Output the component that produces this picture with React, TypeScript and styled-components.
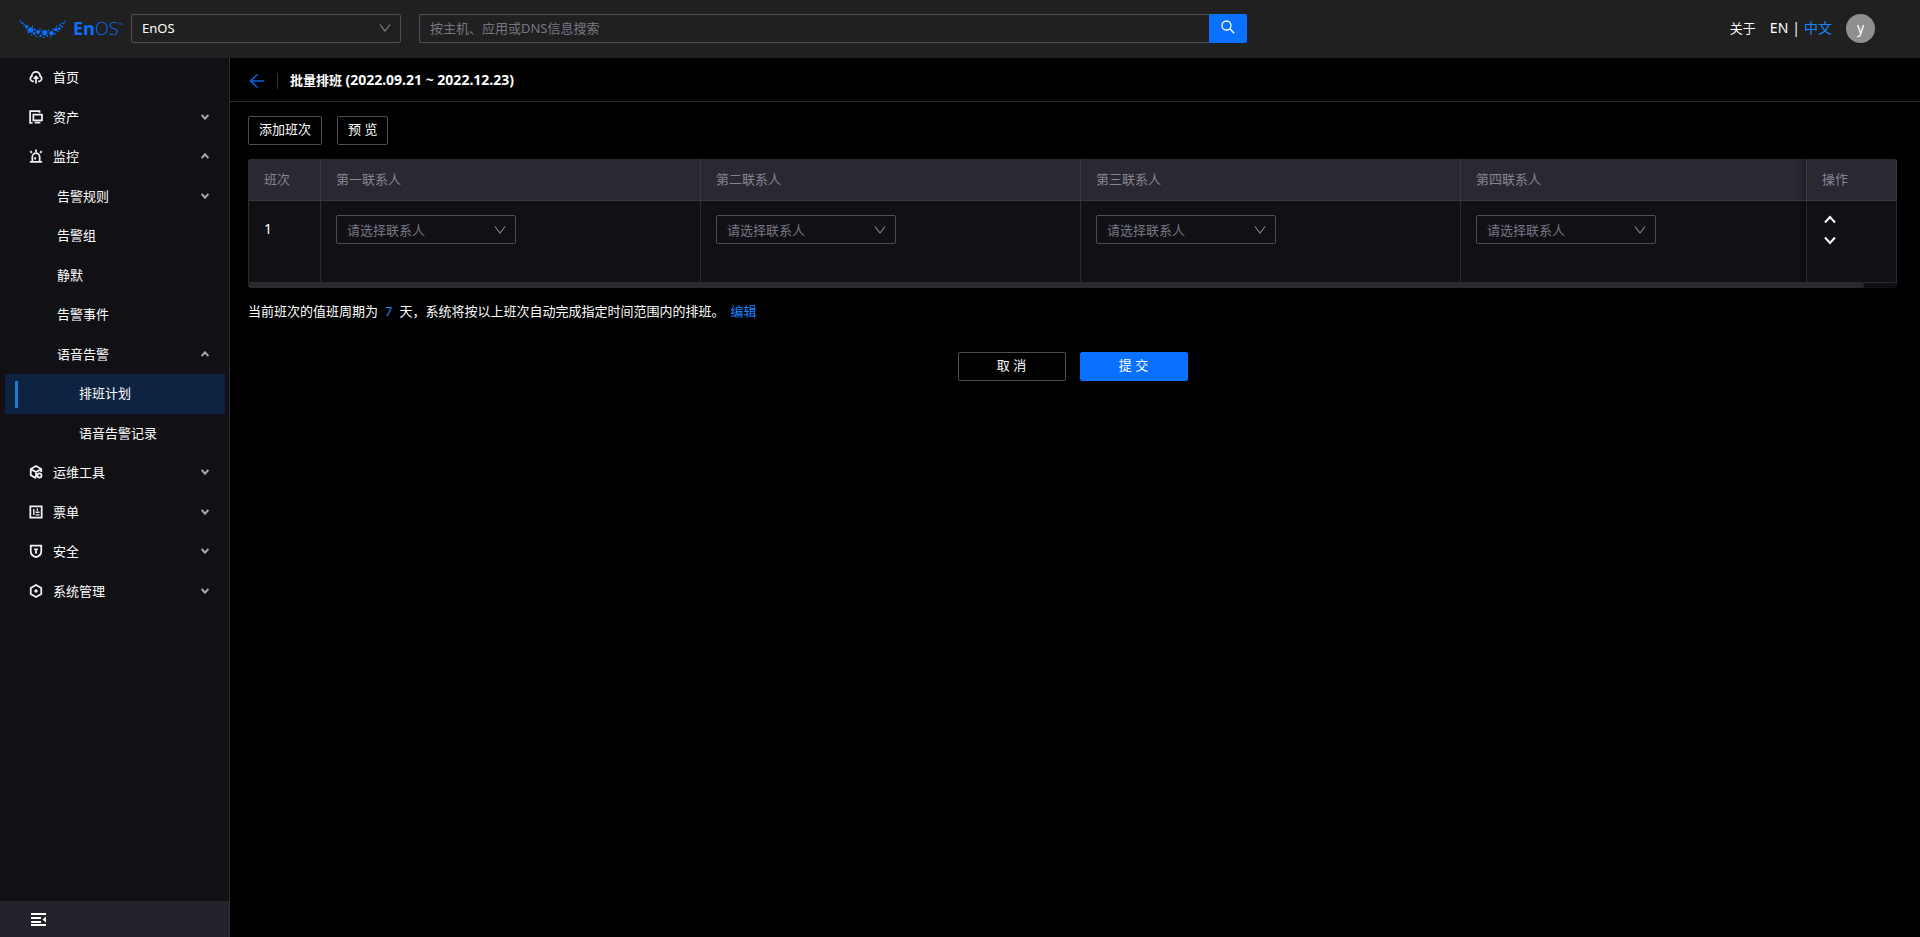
import React from 'react';
import styled, { createGlobalStyle, css } from 'styled-components';

const GlobalStyle = createGlobalStyle`
  * { box-sizing: border-box; }
  html, body, #root { height: 100%; margin: 0; }
  body {
    background: #000;
    color: #fff;
    font: 13px/20px "Noto Sans", "Noto Sans CJK SC", sans-serif;
  }
  button, input, select { font: inherit; color: inherit; margin: 0; }
  button { cursor: pointer; }
  a { text-decoration: none; color: inherit; }
`;

const Page = styled.div`
  min-height: 100%;
  display: flex;
  flex-direction: column;
`;

const Header = styled.header`
  height: 58px;
  flex: none;
  display: flex;
  align-items: center;
  padding: 0 45px 2px 19px;
  background: #202020;
`;

const LogoLink = styled.a`
  display: flex;
  align-items: center;
  width: 112px;
`;

const SelectBox = styled.label<{ $width: number }>`
  display: grid;
  align-items: center;
  width: ${(p) => p.$width}px;
  height: 29px;
  > * { grid-area: 1 / 1; }
  > svg { justify-self: end; margin-right: 10px; pointer-events: none; }
`;

const NativeSelect = styled.select<{ $muted?: boolean }>`
  appearance: none;
  width: 100%;
  height: 29px;
  padding: 0 28px 0 10px;
  border: 1px solid #4e4d58;
  border-radius: 2px;
  background: transparent;
  color: ${(p) => (p.$muted ? '#777683' : '#fff')};
  outline: none;
`;

const SearchForm = styled.form`
  display: flex;
  flex: 0 1 828px;
  margin-left: 18px;
`;

const SearchInput = styled.input`
  flex: 1;
  min-width: 0;
  height: 29px;
  padding: 0 10px;
  border: 1px solid #4e4d58;
  border-right: 0;
  border-radius: 2px 0 0 2px;
  background: transparent;
  outline: none;
  &::placeholder { color: #777683; opacity: 1; }
`;

const SearchButton = styled.button`
  display: grid;
  place-items: center;
  width: 38px;
  height: 29px;
  padding: 0 0 2px;
  border: 0;
  border-radius: 0 2px 2px 0;
  background: #0a70ff;
`;

const HeaderLinks = styled.nav`
  display: flex;
  align-items: center;
  margin-left: auto;
  gap: 14px;
`;

const Languages = styled.div`
  display: flex;
  gap: 4px;
  font-size: 14px;
`;

const BlueLink = styled.a`
  color: #1b86ff;
`;

const Avatar = styled.button`
  width: 29px;
  height: 29px;
  padding: 0;
  border: 0;
  border-radius: 50%;
  background: #8f8f8f;
  font-size: 14px;
`;

const Body = styled.div`
  flex: 1;
  display: flex;
`;

const Sidebar = styled.aside`
  width: 230px;
  flex: none;
  display: flex;
  flex-direction: column;
  border-right: 1px solid #2f2f33;
  background: #111015;
`;

const indent = { 1: 24, 2: 52, 3: 74 };

const MenuItem = styled.a<{ $level: 1 | 2 | 3; $active?: boolean }>`
  display: flex;
  align-items: center;
  height: 100%;
  padding: 0 16px 2px ${(p) => indent[p.$level]}px;
  > span { flex: 1; }
  ${(p) =>
    p.$active &&
    css`
      background: linear-gradient(#1b7bdc, #1b7bdc) 10px 7px / 3px 27px no-repeat, #0e2341;
    `}
`;

const Menu = styled.ul`
  flex: 1;
  margin: 0;
  padding: 0 4px 0 5px;
  list-style: none;
  > li { height: 40px; }
  > li:nth-child(even) { height: 39px; }
`;

const MenuIcon = styled.svg`
  width: 14px;
  height: 14px;
  margin-right: 10px;
  fill: none;
  stroke: #f2f2f4;
  stroke-width: 2;
`;

const CollapseBar = styled.button`
  display: flex;
  align-items: center;
  height: 36px;
  padding: 0 0 0 31px;
  border: 0;
  background: #23212a;
`;

const Main = styled.main`
  flex: 1;
  min-width: 0;
`;

const TitleBar = styled.div`
  display: flex;
  align-items: center;
  height: 44px;
  padding: 3px 18px 0 19px;
  border-bottom: 1px solid #2a2a2d;
`;

const BackLink = styled.a`
  display: flex;
  padding-right: 12px;
  margin-right: 12px;
  border-right: 1px solid #333338;
`;

const Title = styled.h1`
  margin: 0;
  padding-bottom: 2px;
  font-size: 13px;
  line-height: 20px;
  font-weight: 700;
  > span { font-size: 14px; }
`;

const Content = styled.div`
  padding: 14px 23px 0 18px;
`;

const Toolbar = styled.div`
  display: flex;
  gap: 15px;
  margin-bottom: 14px;
`;

const Button = styled.button<{ $primary?: boolean; $wide?: boolean }>`
  height: 29px;
  width: ${(p) => (p.$wide ? '108px' : 'auto')};
  padding: 0 10px 3px;
  border: 1px solid ${(p) => (p.$primary ? '#0a70ff' : '#4e4d58')};
  border-radius: 2px;
  background: ${(p) => (p.$primary ? '#0a70ff' : 'transparent')};
`;

const TableFrame = styled.div`
  border-radius: 3px;
  overflow: hidden;
  background: #111015;
`;

const Table = styled.table`
  width: 100%;
  table-layout: fixed;
  border-collapse: separate;
  border-spacing: 0;
  border-left: 1px solid #2c2b31;
  th, td {
    padding: 0 15px;
    text-align: left;
    font-weight: 400;
    border-right: 1px solid #2c2b31;
    border-bottom: 1px solid #2c2b31;
  }
  th {
    height: 42px;
    padding-bottom: 2px;
    background: #2a2831;
    color: #85848f;
    border-color: #3a3941;
  }
  td {
    height: 82px;
    padding-top: 14px;
    vertical-align: top;
  }
  th:nth-last-child(2) {
    background: linear-gradient(to left, #1f1e24, #2a2831 9px);
  }
  td:nth-last-child(2) {
    background: linear-gradient(to left, #0b0b0e, #111015 7px);
  }
`;

const IndexHead = styled.th`
  width: 72px;
`;

const ContactHead = styled.th`
  width: 380px;
  &:nth-last-child(2) { width: auto; }
`;

const ActionHead = styled.th`
  width: 90px;
`;

const ShiftNumber = styled.div`
  font-size: 14px;
  line-height: 28px;
`;

const MoveButtons = styled.div`
  display: flex;
  flex-direction: column;
  align-items: flex-start;
  gap: 12px;
  padding-left: 2px;
`;

const MoveButton = styled.button`
  display: flex;
  padding: 0;
  border: 0;
  background: transparent;
`;

const ScrollThumb = styled.div`
  height: 5px;
  margin-right: 33px;
  border-radius: 3px;
  background: #2a2a2e;
`;

const Note = styled.p`
  margin: 13px 0 31px;
  > a { margin-left: 6px; }
`;

const Days = styled.span`
  margin: 0 7px;
  color: #1b86ff;
`;

const Actions = styled.div`
  display: flex;
  justify-content: center;
  gap: 14px;
`;

const Chevron = ({ up, width = 8, weight = 2, color = '#a8a8ac' }: { up?: boolean; width?: number; weight?: number; color?: string }) => (
  <svg width={width} height={width * 0.75} viewBox="0 0 12 9" fill="none" stroke={color} strokeWidth={(weight * 12) / width}>
    <path d={up ? 'M1 7.5 6 2l5 5.5' : 'M1 1.5 6 7l5-5.5'} />
  </svg>
);

const SelectArrow = () => (
  <svg width="12" height="10" viewBox="0 0 12 10" fill="none" stroke="#85848f" strokeWidth="1.1">
    <path d="M1 1.5 6 8l5-6.5" />
  </svg>
);

const logoDots: number[][] = [
  [1.3, 3, 0.8], [3, 5, 0.9], [4.6, 5.2, 0.6], [5.2, 7.2, 0.9], [7.7, 8.7, 1.7], [8, 12, 0.7],
  [11.7, 12, 2.7], [9.2, 14.4, 0.8], [13.6, 8.6, 0.8], [15.8, 11.6, 1.1], [15, 15.4, 1.3], [12.5, 17, 0.7],
  [19, 14, 2.1], [17, 17.8, 0.9], [21, 11, 0.8], [21.7, 17.8, 1.2], [22.6, 13, 0.8], [19.6, 19.2, 0.6],
  [25.7, 14.7, 2.6], [25, 19.3, 0.8], [28.3, 18, 1], [29.3, 12.4, 0.9], [32.5, 15.2, 2.3], [31.8, 19, 0.7],
  [34.2, 11.4, 0.9], [36.2, 15.8, 0.8], [37, 11.5, 1.7], [38.8, 13.6, 0.8], [37.6, 8.4, 0.8], [40.4, 10.8, 1.4],
  [41, 7.2, 1], [43, 8.4, 1], [43.4, 5.4, 0.9], [45, 5.4, 0.8], [46, 3.2, 0.7],
];

const LogoText = styled.span`
  margin-left: 7px;
  color: #0a70ff;
  font-family: "Open Sans", sans-serif;
  font-size: 18px;
  line-height: 20px;
  font-weight: 300;
  > b { font-weight: 700; }
  > sup { font-size: 6px; line-height: 6px; vertical-align: 8px; }
`;

const icons: Record<string, React.ReactNode> = {
  home: (
    <>
      <path d="M5.5 13H4.2A3.2 3.2 0 0 1 3.2 7 4.8 4.8 0 0 1 12.8 7a3.2 3.2 0 0 1-1 6h-1.3" />
      <path d="M8 15.5V7.5M5.3 10 8 7.3 10.7 10" />
    </>
  ),
  asset: (
    <>
      <path d="M12 3V1.3H1.3V14.7H4" />
      <path d="M5 5.300H14.800V11.800H5ZM6.500 14.500H13" />
    </>
  ),
  monitor: (
    <>
      <path d="M1 14.800H15M3.800 14V9a4.200 4.200 0 0 1 8.400 0V14M8 .5V3.500M1.500 2.500 3.200 4.500M14.500 2.500 12.800 4.500" />
      <path d="M7 9.500V12" />
    </>
  ),
  tools: (
    <>
      <path d="M8 15 2 11.700V4.500L8 1.200 14 4.500V8M2.500 5 8 8 13.500 5M8 8V14" />
      <circle cx="12" cy="12" r="2.300" />
    </>
  ),
  ticket: (
    <>
      <path d="M1.500 1.500H14.500V14.500H1.500Z" />
      <path d="M5.500 4.500V11.500M7.500 8.300H12M7.500 11.300H12M9.500 4V6.500" strokeWidth="1.600" />
    </>
  ),
  security: (
    <>
      <path d="M2 1.800H14V8.500C14 12 11 14 8 15 5 14 2 12 2 8.500Z" />
      <path d="M5.800 6H10.200M8 5.500V11" />
    </>
  ),
  system: (
    <>
      <path d="M8 1.200 14 4.600V11.400L8 14.800 2 11.400V4.600Z" />
      <circle cx="8" cy="8" r="1" fill="#f2f2f4" />
    </>
  ),
};

type Item = { label: string; level: 1 | 2 | 3; icon?: string; open?: boolean; active?: boolean };

const items: Item[] = [
  { label: '首页', level: 1, icon: 'home' },
  { label: '资产', level: 1, icon: 'asset', open: false },
  { label: '监控', level: 1, icon: 'monitor', open: true },
  { label: '告警规则', level: 2, open: false },
  { label: '告警组', level: 2 },
  { label: '静默', level: 2 },
  { label: '告警事件', level: 2 },
  { label: '语音告警', level: 2, open: true },
  { label: '排班计划', level: 3, active: true },
  { label: '语音告警记录', level: 3 },
  { label: '运维工具', level: 1, icon: 'tools', open: false },
  { label: '票单', level: 1, icon: 'ticket', open: false },
  { label: '安全', level: 1, icon: 'security', open: false },
  { label: '系统管理', level: 1, icon: 'system', open: false },
];

const contacts = ['第一联系人', '第二联系人', '第三联系人', '第四联系人'];

export default function App() {
  return (
    <Page>
      <GlobalStyle />
      <Header>
        <LogoLink href="#" aria-label="EnOS">
          <svg width="47" height="20" viewBox="0 0 47 20" fill="#0a70ff">
            {logoDots.map(([x, y, r], i) => (
              <circle key={i} cx={x} cy={y} r={r} />
            ))}
          </svg>
          <LogoText><b>En</b>OS<sup>™</sup></LogoText>
        </LogoLink>
        <SelectBox $width={270}>
          <NativeSelect aria-label="应用" defaultValue="EnOS">
            <option>EnOS</option>
          </NativeSelect>
          <SelectArrow />
        </SelectBox>
        <SearchForm>
          <SearchInput aria-label="搜索" placeholder="按主机、应用或DNS信息搜索" />
          <SearchButton type="button" aria-label="搜索">
            <svg width="14" height="14" viewBox="0 0 14 14" fill="none" stroke="#fff" strokeWidth="1.300">
              <circle cx="5.500" cy="5.500" r="4.500" />
              <path d="M8.800 8.800 13.200 13.200" />
            </svg>
          </SearchButton>
        </SearchForm>
        <HeaderLinks>
          <a href="#">关于</a>
          <Languages>
            <a href="#">EN</a>|<BlueLink href="#">中文</BlueLink>
          </Languages>
          <Avatar type="button">y</Avatar>
        </HeaderLinks>
      </Header>
      <Body>
        <Sidebar>
          <Menu>
            {items.map((item) => (
              <li key={item.label}>
                <MenuItem href="#" $level={item.level} $active={item.active}>
                  {item.icon && <MenuIcon viewBox="0 0 16 16">{icons[item.icon]}</MenuIcon>}
                  <span>{item.label}</span>
                  {item.open !== undefined && <Chevron up={item.open} />}
                </MenuItem>
              </li>
            ))}
          </Menu>
          <CollapseBar type="button" aria-label="收起菜单">
            <svg width="15" height="13" viewBox="0 0 15 13" fill="#fff">
              <path d="M0 0H15V2H0ZM0 4H10V6H0ZM0 8H10V10H0ZM0 11H15V13H0ZM15 3.500V9.500L11.500 6.500Z" />
            </svg>
          </CollapseBar>
        </Sidebar>
        <Main>
          <TitleBar>
            <BackLink href="#" aria-label="返回">
              <svg width="16" height="16" viewBox="0 0 16 16" fill="none" stroke="#0b62dc" strokeWidth="1.500">
                <path d="M15 8H1.500M8.500 1.500 1.500 8 8.500 14.500" />
              </svg>
            </BackLink>
            <Title>批量排班 <span>(2022.09.21 ~ 2022.12.23)</span></Title>
          </TitleBar>
          <Content>
            <Toolbar>
              <Button type="button">添加班次</Button>
              <Button type="button">预 览</Button>
            </Toolbar>
            <TableFrame>
              <Table>
                <thead>
                  <tr>
                    <IndexHead>班次</IndexHead>
                    {contacts.map((c) => <ContactHead key={c}>{c}</ContactHead>)}
                    <ActionHead>操作</ActionHead>
                  </tr>
                </thead>
                <tbody>
                  <tr>
                    <td><ShiftNumber>1</ShiftNumber></td>
                    {contacts.map((c) => (
                      <td key={c}>
                        <SelectBox $width={180}>
                          <NativeSelect $muted aria-label={c} defaultValue="请选择联系人">
                            <option>请选择联系人</option>
                          </NativeSelect>
                          <SelectArrow />
                        </SelectBox>
                      </td>
                    ))}
                    <td>
                      <MoveButtons>
                        <MoveButton type="button" aria-label="上移"><Chevron up width={12} weight={2} color="#fff" /></MoveButton>
                        <MoveButton type="button" aria-label="下移"><Chevron width={12} weight={2} color="#fff" /></MoveButton>
                      </MoveButtons>
                    </td>
                  </tr>
                </tbody>
              </Table>
              <ScrollThumb />
            </TableFrame>
            <Note>
              当前班次的值班周期为<Days>7</Days>天，系统将按以上班次自动完成指定时间范围内的排班。<BlueLink href="#">编辑</BlueLink>
            </Note>
            <Actions>
              <Button type="button" $wide>取 消</Button>
              <Button type="button" $wide $primary>提 交</Button>
            </Actions>
          </Content>
        </Main>
      </Body>
    </Page>
  );
}
